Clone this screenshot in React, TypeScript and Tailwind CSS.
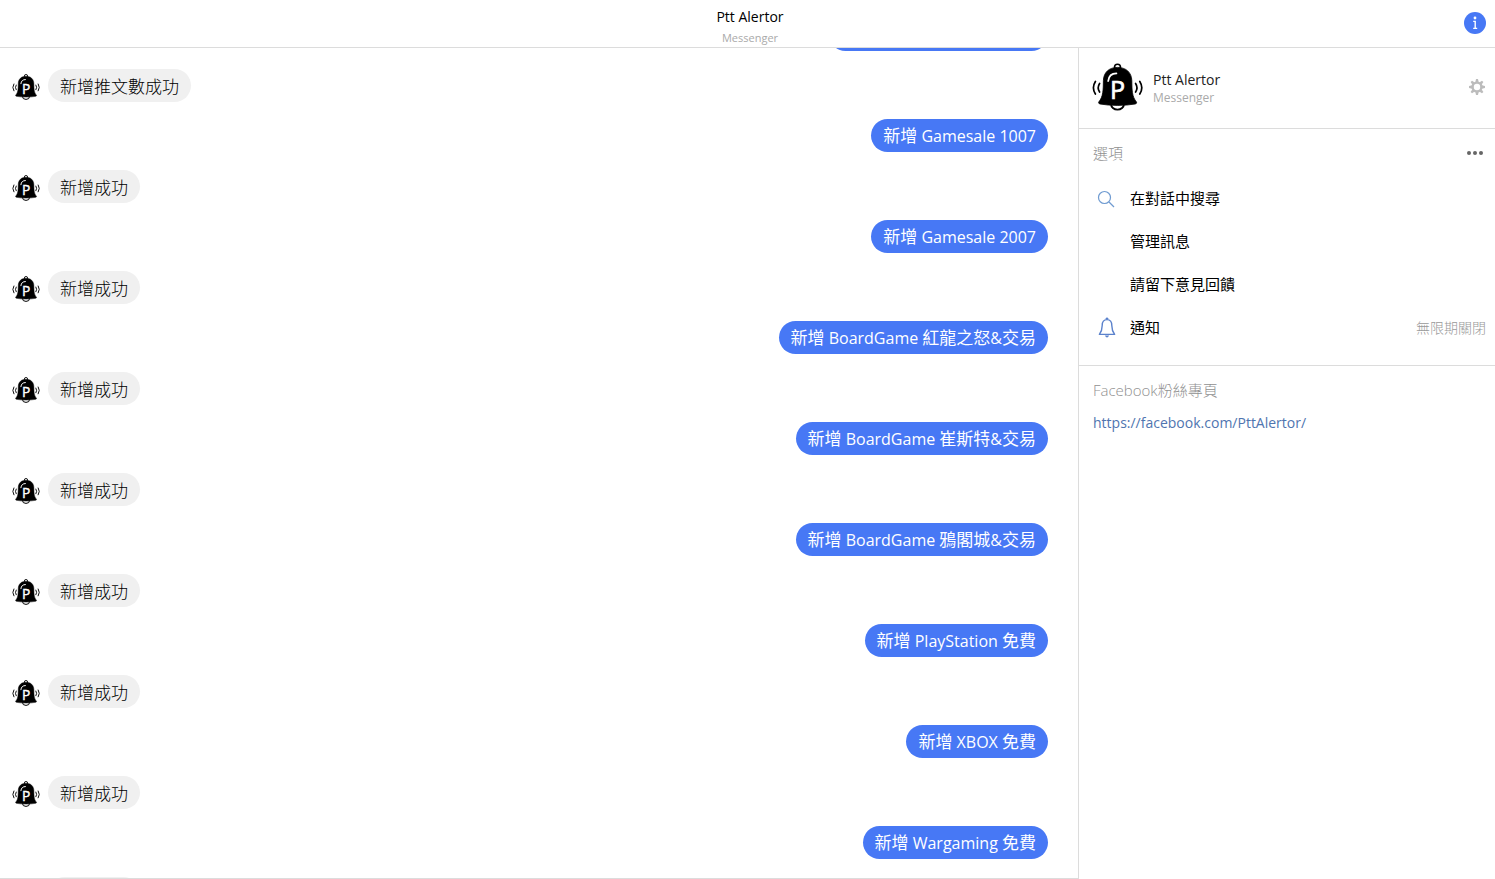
import { Fragment } from 'react';

const exchanges = [
  { sent: '新增推文數 Gamesale 100', reply: '新增推文數成功' },
  { sent: '新增 Gamesale 1007', reply: '新增成功' },
  { sent: '新增 Gamesale 2007', reply: '新增成功' },
  { sent: '新增 BoardGame 紅龍之怒&交易', reply: '新增成功' },
  { sent: '新增 BoardGame 崔斯特&交易', reply: '新增成功' },
  { sent: '新增 BoardGame 鴉閣城&交易', reply: '新增成功' },
  { sent: '新增 PlayStation 免費', reply: '新增成功' },
  { sent: '新增 XBOX 免費', reply: '新增成功' },
  { sent: '新增 Wargaming 免費', reply: '新增成功' },
];

function BellLogo({ className }: { className: string }) {
  return (
    <svg viewBox="12 13 51 48" className={className} fill="none" aria-hidden>
      <circle cx="37.5" cy="17.2" r="3" stroke="#000" strokeWidth="1.6" />
      <path d="M31 54a6.5 5.6 0 0 0 13 0" stroke="#000" strokeWidth="1.8" />
      <path
        d="M37.5 17.4C29 17.4 23.6 22.5 23.4 30.5C23.2 40 23.4 46.5 18.6 52.2Q18.4 53.6 20 54Q28 55.4 37.6 55.4Q47 55.4 55.2 54Q56.8 53.6 56.6 52.2C51.8 46.5 52 40 51.8 30.5C51.6 22.5 46 17.4 37.5 17.4Z"
        fill="#000"
        stroke="#000"
        strokeWidth="0.8"
      />
      <path d="M28.2 31C28.8 26 31.4 23.4 36.4 23.4" stroke="#fff" strokeWidth="1.8" strokeLinecap="round" />
      <text x="30" y="49.2" fontSize="25" fill="#fff" stroke="#fff" strokeWidth="0.7" fontFamily="'Open Sans', sans-serif">
        P
      </text>
      <g stroke="#000" strokeWidth="1.7" strokeLinecap="round">
        <path d="M15.4 31.5Q11.4 37.8 15.4 44" />
        <path d="M19.6 33.5Q16.8 37.8 19.6 42" />
        <path d="M55.6 33.5Q58.4 37.8 55.6 42" />
        <path d="M59.8 31.5Q63.8 37.8 59.8 44" />
      </g>
    </svg>
  );
}

function InfoIcon() {
  return (
    <svg viewBox="0 0 22 22" className="size-[22px]" aria-hidden>
      <circle cx="11" cy="11" r="11" fill="#4778f5" />
      <circle cx="11" cy="6" r="1.4" fill="#fff" />
      <path d="M9.2 9.4h2v7M9.2 16.4h4" stroke="#fff" strokeWidth="1.4" fill="none" />
    </svg>
  );
}

function GearIcon() {
  const teeth = [0, 45, 90, 135, 180, 225, 270, 315];
  return (
    <svg viewBox="0 0 16 16" className="size-4" aria-hidden>
      <circle cx="8" cy="8" r="4.4" fill="none" stroke="#bcbcbc" strokeWidth="2.4" />
      {teeth.map((deg) => (
        <path key={deg} d="M6.3 3.2L7 0h2l.7 3.2z" fill="#bcbcbc" transform={`rotate(${deg} 8 8)`} />
      ))}
    </svg>
  );
}

function SearchIcon() {
  return (
    <svg viewBox="0 0 18 18" className="size-[18px]" fill="none" stroke="#6f9bd1" strokeWidth="1.2" aria-hidden>
      <circle cx="7.5" cy="7.5" r="6" />
      <path d="M12 12l5 5" />
    </svg>
  );
}

function NotificationIcon() {
  return (
    <svg viewBox="0 0 18 22" className="ml-[5px] h-[22px] w-[18px]" fill="none" stroke="#5b82cc" strokeWidth="1.4" aria-hidden>
      <path d="M9 2.6C5.8 2.6 4.2 5 4.2 8.4C4.2 13 3.4 14.6 1.4 17.4H16.6C14.6 14.6 13.8 13 13.8 8.4C13.8 5 12.2 2.6 9 2.6Z" strokeLinejoin="round" />
      <path d="M8 2.2Q9 .4 10 2.2" />
      <path d="M6.8 18.6Q9 22.6 11.2 18.6z" fill="#5b82cc" stroke="none" />
    </svg>
  );
}

// Latin words run slightly smaller than the Chinese text around them
function MessageText({ text }: { text: string }) {
  return text.split(/([A-Za-z0-9& ]+)/).map((part, i) => (
    <Fragment key={i}>{i % 2 ? <span className="text-[16px]">{part}</span> : part}</Fragment>
  ));
}

function Conversation() {
  return (
    <main className="min-w-0 flex-1 overflow-hidden border-b border-[#dcdcdc]">
      <ul className="-mt-[30px] text-[17px] leading-[33px]">
        {exchanges.map(({ sent, reply }) => (
          <Fragment key={sent}>
            <li className="mb-[18px] flex justify-end pr-[30px]">
              <p className="h-[33px] rounded-full bg-[#4778f5] px-3 text-white">
                <MessageText text={sent} />
              </p>
            </li>
            <li className="mb-[17px] flex h-[33px] items-end gap-2 pl-3">
              <BellLogo className="mb-px h-7 w-7" />
              <p className="h-[33px] rounded-full bg-[#f0f0f0] px-3 pt-px font-light text-black">{reply}</p>
            </li>
          </Fragment>
        ))}
      </ul>
    </main>
  );
}

function Sidebar() {
  return (
    <aside className="w-[417px] shrink-0 border-l border-[#dcdcdc] text-[15px]">
      <section className="flex h-[81px] items-center border-b border-[#dcdcdc] pr-[10px] pb-0.5 pl-[13px]">
        <BellLogo className="h-12 w-[51px]" />
        <div className="mt-0.5 ml-[10px] flex-1">
          <h2 className="text-[14px] leading-5 text-[#222]">Ptt Alertor</h2>
          <p className="text-[12px] leading-4 text-[#aaa]">Messenger</p>
        </div>
        <button aria-label="設定">
          <GearIcon />
        </button>
      </section>

      <section className="border-b border-[#dcdcdc] pr-[9px] pb-4 pl-[14px]">
        <div className="flex h-[48px] items-center justify-between">
          <h3 className="font-light text-[#909090]">選項</h3>
          <button aria-label="更多" className="flex gap-0.5 pr-[3px]">
            <span className="size-1 rounded-full bg-[#666]" />
            <span className="size-1 rounded-full bg-[#666]" />
            <span className="size-1 rounded-full bg-[#666]" />
          </button>
        </div>
        <ul className="text-black">
          <li>
            <button className="flex h-[43px] w-full items-center">
              <span className="w-[37px] pl-1">
                <SearchIcon />
              </span>
              在對話中搜尋
            </button>
          </li>
          <li>
            <button className="flex h-[43px] w-full items-center pl-[37px]">管理訊息</button>
          </li>
          <li>
            <button className="flex h-[43px] w-full items-center pl-[37px]">請留下意見回饋</button>
          </li>
          <li>
            <button className="flex h-[43px] w-full items-center">
              <span className="w-[37px]">
                <NotificationIcon />
              </span>
              通知
              <span className="ml-auto text-[14px] font-light text-[#999]">無限期關閉</span>
            </button>
          </li>
        </ul>
      </section>

      <section className="px-[14px] pt-3">
        <h3 className="leading-6 font-light text-[#909090]">Facebook粉絲專頁</h3>
        <a href="https://facebook.com/PttAlertor/" className="mt-[9px] block text-[14px] leading-6 text-[#4f75b0]">
          https://facebook.com/PttAlertor/
        </a>
      </section>
    </aside>
  );
}

export default function App() {
  return (
    <div lang="zh-Hant" className="flex h-screen flex-col bg-white font-['Open_Sans','Noto_Sans_CJK_TC',sans-serif]">
      <header className="grid h-12 shrink-0 grid-cols-[1fr_auto_1fr] items-center border-b border-[#dcdcdc] pr-[9px]">
        <div className="col-start-2 pt-[7px] pl-[14px] text-center">
          <h1 className="text-[14px] leading-5 text-black">Ptt Alertor</h1>
          <p className="text-[11px] leading-[22px] text-[#aaa]">Messenger</p>
        </div>
        <button aria-label="對話資訊" className="-mt-1 justify-self-end">
          <InfoIcon />
        </button>
      </header>
      <div className="flex min-h-0 flex-1">
        <Conversation />
        <Sidebar />
      </div>
    </div>
  );
}
